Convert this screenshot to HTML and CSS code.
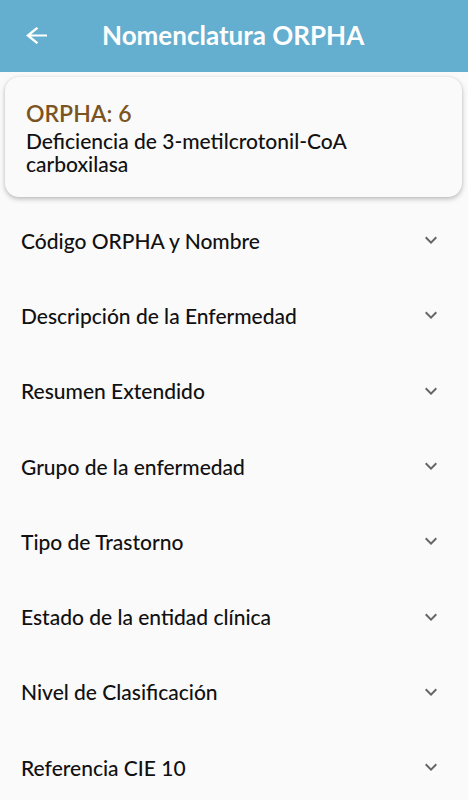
FILE: index.html
```html
<!DOCTYPE html>
<html lang="es">
<head>
<meta charset="utf-8">
<link rel="stylesheet" href="styles.css">
</head>
<body>
<header class="appbar">
  <svg class="back" viewBox="4 4 16 16" preserveAspectRatio="none"><path d="M20 11H7.83l5.59-5.59L12 4l-8 8 8 8 1.41-1.41L7.83 13H20v-2z" fill="#fff"/></svg>
  <h1 class="title">Nomenclatura ORPHA</h1>
</header>
<section class="card">
  <div class="code">ORPHA: 6</div>
  <div class="name">Deficiencia de 3-metilcrotonil-CoA carboxilasa</div>
</section>
<ul class="list">
  <li class="item"><span>Código ORPHA y Nombre</span><svg class="chev" viewBox="0 0 24 24"><path d="M16.59 8.59L12 13.17 7.41 8.59 6 10l6 6 6-6z"/></svg></li>
  <li class="item"><span>Descripción de la Enfermedad</span><svg class="chev" viewBox="0 0 24 24"><path d="M16.59 8.59L12 13.17 7.41 8.59 6 10l6 6 6-6z"/></svg></li>
  <li class="item"><span>Resumen Extendido</span><svg class="chev" viewBox="0 0 24 24"><path d="M16.59 8.59L12 13.17 7.41 8.59 6 10l6 6 6-6z"/></svg></li>
  <li class="item"><span>Grupo de la enfermedad</span><svg class="chev" viewBox="0 0 24 24"><path d="M16.59 8.59L12 13.17 7.41 8.59 6 10l6 6 6-6z"/></svg></li>
  <li class="item"><span>Tipo de Trastorno</span><svg class="chev" viewBox="0 0 24 24"><path d="M16.59 8.59L12 13.17 7.41 8.59 6 10l6 6 6-6z"/></svg></li>
  <li class="item"><span>Estado de la entidad clínica</span><svg class="chev" viewBox="0 0 24 24"><path d="M16.59 8.59L12 13.17 7.41 8.59 6 10l6 6 6-6z"/></svg></li>
  <li class="item"><span>Nivel de Clasificación</span><svg class="chev" viewBox="0 0 24 24"><path d="M16.59 8.59L12 13.17 7.41 8.59 6 10l6 6 6-6z"/></svg></li>
  <li class="item"><span>Referencia CIE 10</span><svg class="chev" viewBox="0 0 24 24"><path d="M16.59 8.59L12 13.17 7.41 8.59 6 10l6 6 6-6z"/></svg></li>
</ul>
</body>
</html>
```
FILE: styles.css
```css
html, body {
  margin: 0;
  padding: 0;
}
body {
  width: 468px;
  height: 800px;
  overflow: hidden;
  background: #fafafa;
  font-family: Lato, "Open Sans", sans-serif;
  color: #111;
}
.appbar {
  height: 72px;
  background: #64aecf;
  display: flex;
  align-items: center;
  box-sizing: border-box;
  padding-left: 26px;
}
.back {
  width: 21px;
  height: 17px;
  margin-top: -2px;
}
.title {
  margin: -2px 0 0 55px;
  font-size: 26px;
  font-weight: 700;
  color: #fff;
}
.card {
  margin: 5px 6px 0 5px;
  height: 120px;
  box-sizing: border-box;
  background: #fafafa;
  border-radius: 14px;
  box-shadow: 0 2px 5px rgba(0,0,0,0.25), 0 0 2px rgba(0,0,0,0.08);
  padding: 23px 20px 0 21px;
}
.code {
  color: #7b5422;
  font-size: 23px;
  font-weight: 600;
  line-height: 26px;
}
.name {
  font-size: 21px;
  font-weight: 500;
  line-height: 23.5px;
  margin-top: 2.5px;
  padding-right: 60px;
}
.list {
  list-style: none;
  margin: 5.5px 0 0 0;
  padding: 0;
}
.item {
  height: 75.3px;
  display: flex;
  align-items: center;
  justify-content: space-between;
  padding: 0 25px 0 21px;
  font-size: 21px;
  font-weight: 500;
  color: #111;
}
.chev {
  width: 24px;
  height: 24px;
  fill: #666;
}
```
